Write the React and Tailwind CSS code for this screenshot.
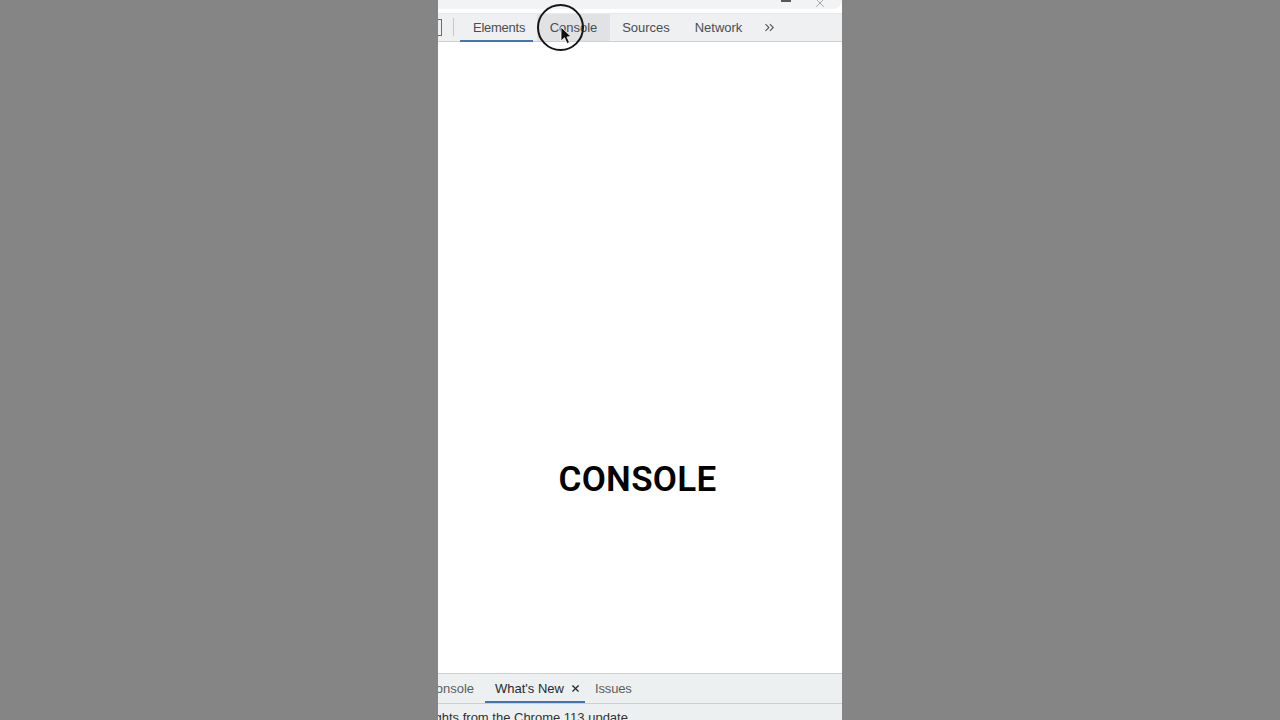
import { ChevronsRight, X } from 'lucide-react';

const App = () => {
  return (
    <div className="h-screen overflow-hidden bg-[#858585] flex justify-center font-['Liberation_Sans',Arial,sans-serif]">
      <div className="relative w-[404px] h-full flex flex-col overflow-hidden bg-white">
        {/* Browser strip, cut off by the top of the video */}
        <div className="h-[9px] bg-[#f1f3f4] rounded-br-[14px] shrink-0 flex justify-end items-end pr-[15px] gap-[22px]">
          <div className="w-[10px] h-[2px] mb-[7px] bg-[#55585c]" />
          <X size={14} strokeWidth={1.5} className="text-[#9a9da0] mb-[-1px]" />
        </div>
        <div className="h-[4px] shrink-0" />

        {/* Devtools tabs */}
        <div className="h-[29px] shrink-0 bg-[#eef0f1] border-b border-[#cdd0d2] border-t border-t-[#e6e8e9] flex items-stretch text-[13px] text-[#4a4e52]">
          <div className="w-[4px] h-[17px] mt-[5px] border border-l-0 border-[#6a6d70] shrink-0" />
          <div className="w-px h-[18px] mt-[4px] bg-[#c4c7c9] ml-[11px] shrink-0" />
          <div className="ml-[6px] w-[73px] h-[28px] pt-[2px] pl-[13px] flex items-center border-b-2 border-[#3f74b5] tracking-[-0.25px] shrink-0">Elements</div>
          <div className="ml-[4px] w-[73px] h-[27px] flex items-center justify-center bg-[#e0e2e4] shrink-0">Console</div>
          <div className="w-[72px] flex items-center justify-center shrink-0">Sources</div>
          <div className="w-[73px] flex items-center justify-center shrink-0">Network</div>
          <div className="flex items-center ml-[7px]">
            <ChevronsRight size={15} strokeWidth={1.7} className="text-[#55585c]" />
          </div>
        </div>

        <div className="flex-1 flex flex-col items-center justify-end pb-[172px] bg-white">
          <div className="font-['Roboto',sans-serif] font-semibold text-[35px] tracking-[0.3px] leading-[42px] text-black mr-[5px]">CONSOLE</div>
        </div>

        {/* Drawer */}
        <div className="h-[31px] shrink-0 bg-[#edf0f0] border-t border-b border-[#cdd0d2] flex items-stretch text-[13px] text-[#5a5e62] overflow-hidden">
          <div className="w-[47px] ml-[-11px] flex items-center justify-end shrink-0">Console</div>
          <div className="ml-[11px] w-[100px] h-[29px] pt-[2px] flex items-center pl-[10px] gap-[6px] border-b-2 border-[#3f74b5] text-[#26292c] shrink-0">
            <span className="whitespace-nowrap">What's New</span>
            <X size={11} strokeWidth={2.5} className="text-[#222]" />
          </div>
          <div className="ml-[10px] flex items-center tracking-[-0.15px]">Issues</div>
        </div>
        <div className="h-[16px] shrink-0 bg-[#edf0f0] overflow-hidden text-[13px] text-[#2f3235] whitespace-nowrap pt-[6px] leading-[15px]">
          <div className="ml-[-36px]">Highlights from the Chrome 113 update</div>
        </div>

        {/* Click ring and cursor over the Console tab */}
        <div className="absolute left-[99px] top-[4px] w-[47px] h-[47px] rounded-full border-2 border-[#151515]" />
        <svg className="absolute left-[122px] top-[26px]" width="12" height="19" viewBox="0 0 12 19">
          <path d="M1 1 L1 15 L4.5 11.8 L7 17.5 L9.5 16.4 L7 11 L11 10.6 Z" fill="#111" stroke="#fff" strokeWidth="0.8" />
        </svg>
      </div>
    </div>
  );
};

export default App;
